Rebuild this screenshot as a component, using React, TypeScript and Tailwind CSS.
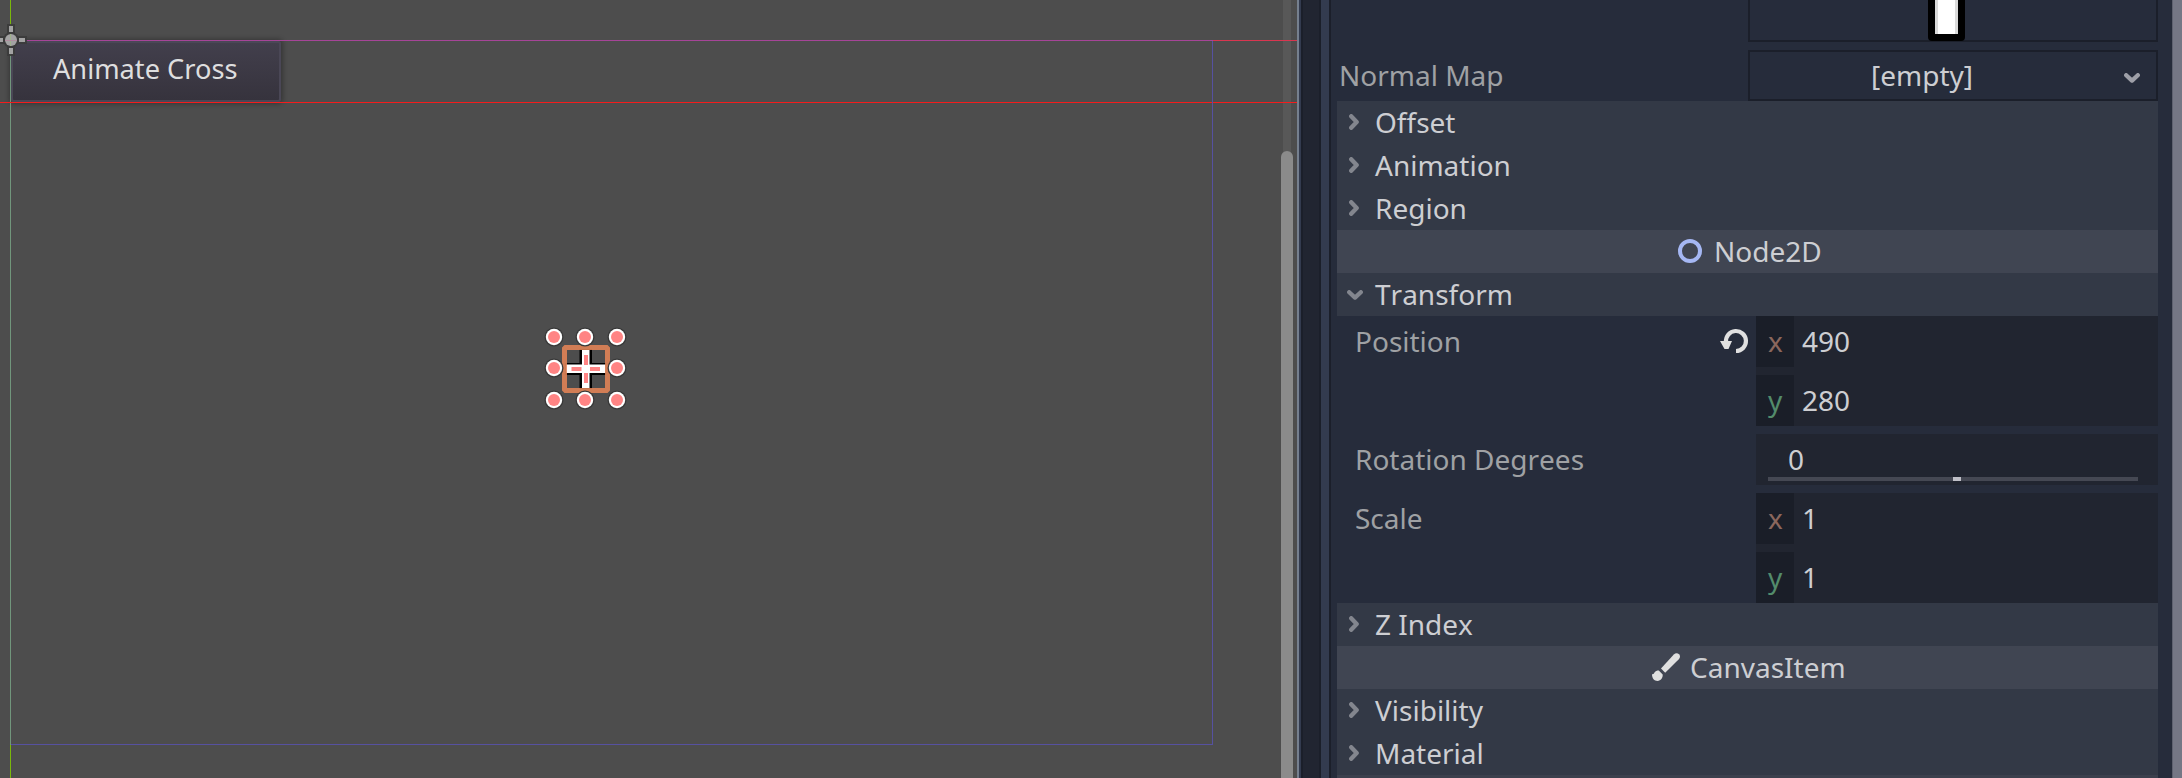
import React from "react";

function Chevron({ open = false, className = "" }: { open?: boolean; className?: string }) {
  return open ? (
    <svg className={`block h-[10px] w-[16px] ${className}`} viewBox="0 0 16 10" fill="none" stroke="currentColor" strokeWidth="4.300" strokeLinecap="round" strokeLinejoin="round">
      <path d="M2.200 2.200L8 7.600l5.800-5.400" />
    </svg>
  ) : (
    <svg className={`block h-[16px] w-[10px] ${className}`} viewBox="0 0 10 16" fill="none" stroke="currentColor" strokeWidth="4.300" strokeLinecap="round" strokeLinejoin="round">
      <path d="M2.200 2.200L7.700 8l-5.500 5.800" />
    </svg>
  );
}

function Section({ title, open = false }: { title: string; open?: boolean }) {
  return (
    <div className="flex h-[43px] shrink-0 bg-[#333946] leading-[43px] text-[#cdced2]">
      <div className="w-[38px] shrink-0 text-[#83868e]">
        {open ? <Chevron open className="mt-[17px] ml-[10px]" /> : <Chevron className="mt-[13px] ml-[12px]" />}
      </div>
      <span>{title}</span>
    </div>
  );
}

function Category({ title, children, pad }: { title: string; children: React.ReactNode; pad: string }) {
  return (
    <div className={`flex h-[43px] shrink-0 bg-[#404552] leading-[43px] text-[#cdced2] ${pad}`}>
      {children}
      <span>{title}</span>
    </div>
  );
}

function Axis({ name, value }: { name: "x" | "y"; value: string }) {
  return (
    <div className="flex h-[51px] leading-[51px]">
      <span className={`w-[38px] bg-[#1a1e28] pl-[12px] ${name === "x" ? "text-[#8b675d]" : "text-[#538b6b]"}`}>{name}</span>
      <span className="pl-[8px] text-[#cdced2]">{value}</span>
    </div>
  );
}

function Property({ label, icon, children }: { label: string; icon?: React.ReactNode; children: React.ReactNode }) {
  return (
    <div className="flex">
      <div className="flex w-[419px] shrink-0 justify-between pl-[18px] leading-[51px] text-[#9fa1a4]">
        <span>{label}</span>
        {icon}
      </div>
      <div className="flex flex-1 flex-col gap-2 bg-[#212530]">{children}</div>
    </div>
  );
}

function Canvas() {
  const handles = [
    [554, 337], [585, 337], [617, 337],
    [554, 368], [617, 368],
    [554, 400], [585, 400], [617, 400],
  ];
  return (
    <div className="relative w-[1297px] shrink-0 overflow-hidden bg-[#4d4d4d]">
      <button className="absolute top-[41px] left-[11px] h-[61px] w-[270px] rounded-[3px] border-2 border-[#4a4756] bg-linear-to-b from-[#423f4c] to-[#36333d] pb-[5px] pl-0 text-left text-[27.2px] leading-[50px] text-[#dededf] shadow-[0_0_5px_2px_rgba(0,0,0,0.3)]">
        <span className="pl-[40px]">Animate Cross</span>
      </button>
      <div className="absolute top-0 left-[1283px] h-[778px] w-[8px] bg-[#585858]" />
      <div className="absolute top-[151px] left-[1281px] h-[700px] w-[12px] rounded-[6px] bg-[#8b8b8b]" />
      <svg className="absolute top-0 left-0" width="1297" height="778" viewBox="0 0 1297 778">
        <g shapeRendering="crispEdges">
          <rect x="10" y="0" width="1" height="40" fill="#7ab80a" />
          <rect x="10" y="40" width="1" height="705" fill="#71967c" />
          <rect x="10" y="745" width="1" height="33" fill="#7ab80a" />
          <rect x="0" y="40" width="11" height="1" fill="#d93650" />
          <rect x="11" y="40" width="1202" height="1" fill="#a64598" />
          <rect x="1213" y="40" width="84" height="1" fill="#d93650" />
          <rect x="0" y="102" width="1297" height="1" fill="#f51c1c" />
          <rect x="1212" y="41" width="1" height="704" fill="#5651a0" />
          <rect x="11" y="744" width="1201" height="1" fill="#5651a0" />
        </g>
        <g fill="#3b3b3b" fillOpacity=".9">
          <rect x="7" y="24" width="8" height="32" />
          <rect x="0" y="36" width="27" height="8" />
          <circle cx="11" cy="40" r="8" />
        </g>
        <g fill="#a3a3a3">
          <rect x="9" y="26" width="4" height="6" />
          <rect x="9" y="48" width="4" height="6" />
          <rect x="0" y="38" width="3" height="4" />
          <rect x="19" y="38" width="6" height="4" />
          <circle cx="11" cy="40" r="6" />
        </g>
        <rect x="10" y="34" width="1" height="12" fill="#9fb38a" />
        <rect x="5" y="40" width="12" height="1" fill="#b08f9e" />
        <path d="M579.500 349h12.500v14h14v12h-14v14h-12.500v-14h-14v-12h14z" fill="#000" />
        <path d="M582 350h7.500v14.500h16v8.500h-16v15h-7.500v-15h-16v-8.500h16z" fill="#fff" />
        <path d="M584 355h4v10h-4zM584 373h4v10h-4zM571.500 367h10v4h-10zM590 367h10v4h-10z" fill="#ff8484" />
        <rect x="564.500" y="347.500" width="43" height="43" fill="none" stroke="#e58456" strokeOpacity=".87" strokeWidth="5" strokeLinejoin="bevel" />
        {handles.map(([x, y], i) => (
          <g key={i}>
            <circle cx={x} cy={y} r="9.500" fill="#383838" />
            <circle cx={x} cy={y} r="8.200" fill="#fff" />
            <circle cx={x} cy={y} r="6" fill="#ff8484" />
          </g>
        ))}
      </svg>
    </div>
  );
}

function Inspector() {
  return (
    <div className="flex w-[841px] shrink-0 flex-col bg-[#262c3b] pr-[14px] pl-[6px] [font-kerning:none]">
      <div className="flex h-[42px] shrink-0 justify-end">
        <div className="flex w-[410px] border-2 border-t-0 border-[#1b1f2a] pl-[178px]">
          <div className="h-[41px] w-[37px] shrink-0 rounded-b-[4px] bg-black px-[7px] pb-[7px]">
            <div className="h-full border-x-[3px] border-[#dadada] bg-white" />
          </div>
        </div>
      </div>
      <div className="mt-2 flex h-[51px] shrink-0 justify-between">
        <span className="pl-[2px] leading-[51px] text-[#9fa1a4]">Normal Map</span>
        <div className="flex w-[410px] justify-between border-2 border-[#1b1f2a] pr-[16px] pl-[121px] leading-[47px] text-[#cdced2]">
          <span>[empty]</span>
          <Chevron open className="mt-[21px] text-[#9ea0a8]" />
        </div>
      </div>
      <Section title="Offset" />
      <Section title="Animation" />
      <Section title="Region" />
      <Category title="Node2D" pad="pl-[341px]">
        <svg className="mt-[9px] mr-[12px] block h-[24px] w-[24px]" viewBox="0 0 24 24">
          <circle cx="12" cy="12" r="10" fill="none" stroke="#a5b7f3" strokeWidth="4" />
        </svg>
      </Category>
      <Section title="Transform" open />
      <div className="flex shrink-0 flex-col gap-2">
        <Property
          label="Position"
          icon={
            <svg className="mt-[12px] mr-[7px] block h-[26px] w-[29px]" viewBox="0 0 29 26">
              <path d="M6 14A10 10 0 1 1 16 23" fill="none" stroke="#e0e0e0" strokeWidth="4.200" />
              <path d="M0 13h12l-3.500 8h-4z" fill="#e0e0e0" />
            </svg>
          }
        >
          <Axis name="x" value="490" />
          <Axis name="y" value="280" />
        </Property>
        <Property label="Rotation Degrees">
          <div className="h-[51px] px-[12px]">
            <div className="h-[43px] pl-[20px] leading-[51px] text-[#cdced2]">0</div>
            <div className="mr-[8px] flex h-[4px] bg-[#454853] pl-[185px]">
              <div className="w-[8px] bg-[#c0c0c8]" />
            </div>
          </div>
        </Property>
        <Property label="Scale">
          <Axis name="x" value="1" />
          <Axis name="y" value="1" />
        </Property>
      </div>
      <Section title="Z Index" />
      <Category title="CanvasItem" pad="pl-[315px]">
        <svg className="mt-[7px] mr-[10px] block h-[28px] w-[28px]" viewBox="0 0 28 28" fill="#e0e0e0">
          <path d="M9 15.500L21.800 1.600C23.500-.2 25.600-.2 27 1.200s1.300 3.500-.2 5L13.200 19.800z" />
          <path d="M0 21.200c1.600.2 2-.6 2.300-1.400C3.200 18 5 17.400 6.800 17.400l3.900 4.200c.2 3.600-1.900 6.300-5.200 6.300-3.200 0-5.500-2.600-5.500-6.700z" />
        </svg>
      </Category>
      <Section title="Visibility" />
      <Section title="Material" />
      <div className="h-[3px] shrink-0 bg-[#3c404d]" />
    </div>
  );
}

export default function App() {
  return (
    <div className="flex h-[778px] w-[2182px] overflow-hidden bg-[#262c3b] font-['Noto_Sans',sans-serif] text-[28px] whitespace-nowrap">
      <Canvas />
      <div className="w-[2px] shrink-0 bg-[#76808f]" />
      <div className="w-[2px] shrink-0 bg-[#333b4f]" />
      <div className="w-[20px] shrink-0 border-x-2 border-[#1b1f2a] bg-[#212531]" />
      <div className="w-[8px] shrink-0 bg-[#333b4f]" />
      <div className="w-[2px] shrink-0 bg-[#1b1f2a]" />
      <Inspector />
      <div className="flex-1 border-l border-[#5f6270] bg-[#757785]" />
    </div>
  );
}
